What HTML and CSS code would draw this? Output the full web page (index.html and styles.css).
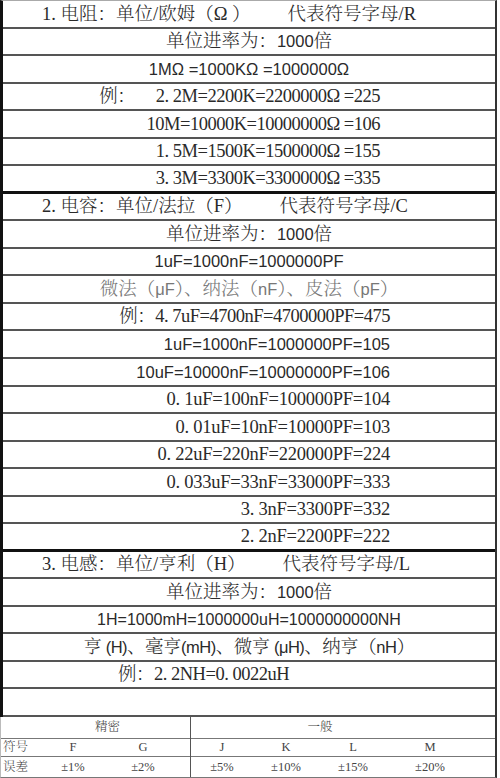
FILE: index.html
```html
<!DOCTYPE html>
<html lang="zh-CN">
<head>
<meta charset="utf-8">
<title>电阻 电容 电感 单位</title>
<link rel="stylesheet" href="styles.css">
</head>
<body>
<div class="sheet">
  <div class="main">
    <div class="row l">1. 电阻：单位/欧姆（Ω ）        代表符号字母/R</div>
    <div class="row c">单位进率为：<span class="sans">1000</span>倍</div>
    <div class="row c s">1MΩ =1000KΩ =1000000Ω</div>
    <div class="row r1 tight">例：     2. 2M=2200K=2200000Ω =225</div>
    <div class="row r1 tight">10M=10000K=10000000Ω =106</div>
    <div class="row r1 tight">1. 5M=1500K=1500000Ω =155</div>
    <div class="row r1 tight thick">3. 3M=3300K=3300000Ω =335</div>
    <div class="row l">2. 电容：单位/法拉（F）        代表符号字母/C</div>
    <div class="row c">单位进率为：<span class="sans">1000</span>倍</div>
    <div class="row c s">1uF=1000nF=1000000PF</div>
    <div class="row c grey">微法（<span class="sans">μF</span>）、纳法（<span class="sans">nF</span>）、皮法（<span class="sans">pF</span>）</div>
    <div class="row r2 tight">例：4. 7uF=4700nF=4700000PF=475</div>
    <div class="row r2 s">1uF=1000nF=1000000PF=105</div>
    <div class="row r2 s">10uF=10000nF=10000000PF=106</div>
    <div class="row r2 semi">0. 1uF=100nF=100000PF=104</div>
    <div class="row r2 semi">0. 01uF=10nF=10000PF=103</div>
    <div class="row r2 semi">0. 22uF=220nF=220000PF=224</div>
    <div class="row r2 semi">0. 033uF=33nF=33000PF=333</div>
    <div class="row r2 semi">3. 3nF=3300PF=332</div>
    <div class="row r2 semi thick">2. 2nF=2200PF=222</div>
    <div class="row l">3. 电感：单位/亨利（H）        代表符号字母/L</div>
    <div class="row c">单位进率为：<span class="sans">1000</span>倍</div>
    <div class="row c s s16">1H=1000mH=1000000uH=1000000000NH</div>
    <div class="row c tight">亨 <span class="sans">(H)</span>、毫亨<span class="sans">(mH)</span>、微亨 <span class="sans">(μH)</span>、纳亨（<span class="sans">nH</span>）</div>
    <div class="row l2 tight">例：2. 2NH=0. 0022uH</div>
    <div class="row"></div>
  </div>
  <div class="legend">
    <div class="lg-side lg-left">
      <div class="lg-h lg-h-l">精密</div>
      <div class="lg-r"><span class="lab">符号</span><span>F</span><span>G</span></div>
      <div class="lg-r last"><span class="lab">误差</span><span>±1%</span><span>±2%</span></div>
    </div>
    <div class="lg-side lg-right">
      <div class="lg-h lg-h-r">一般</div>
      <div class="lg-r"><span>J</span><span>K</span><span>L</span><span>M</span></div>
      <div class="lg-r last"><span>±5%</span><span>±10%</span><span>±15%</span><span>±20%</span></div>
    </div>
  </div>
</div>
</body>
</html>
```

FILE: styles.css
```css
* {
  box-sizing: border-box;
  margin: 0;
  padding: 0;
}

body {
  margin: 0;
  background: #fff;
  width: 500px;
  height: 778px;
  overflow: hidden;
  font-family: "Liberation Serif", "Noto Serif CJK SC", "Noto Sans CJK SC", serif;
  font-weight: 300;
  color: #2a2a2a;
}

.sheet {
  width: 497px;
}

.main {
  height: 717px;
  display: grid;
  grid-template-rows: repeat(26, 1fr);
  border-left: 3px solid #111;
  border-right: 2px solid #333;
  border-top: 1px solid #aaa;
}

.row {
  display: flex;
  align-items: center;
  border-bottom: 2px solid #555;
  font-size: 18.5px;
  line-height: 1;
  white-space: pre;
  min-height: 0;
  overflow: hidden;
}

.row.thick {
  border-bottom: 3px solid #111;
}

.tight {
  letter-spacing: -0.5px;
}

.semi {
  letter-spacing: -0.25px;
}

.c {
  justify-content: center;
}

.r1 {
  justify-content: flex-end;
  padding-right: 115px;
}

.r2 {
  justify-content: flex-end;
  padding-right: 105px;
}

.l {
  padding-left: 39px;
}

.l2 {
  padding-left: 115px;
}

.s,
.sans {
  font-family: "Liberation Sans", "Noto Sans CJK SC", sans-serif;
  font-size: 16.5px;
}

.s16 {
  font-size: 16px;
}

.grey {
  color: #777;
}

.legend {
  display: flex;
  height: 61px;
  border-left: 1px solid #bbb;
  border-right: 2px solid #333;
  border-bottom: 1px solid #777;
  font-family: "Liberation Serif", "Noto Serif CJK SC", "Noto Sans CJK SC", serif;
  font-size: 12.5px;
  line-height: 1;
  color: #444;
}

.lg-side {
  display: grid;
  grid-template-rows: 22px 18px 1fr;
}

.lg-left {
  width: 189px;
}

.lg-right {
  flex: 1;
  border-left: 1px solid #555;
}

.lg-h {
  display: flex;
  align-items: center;
  justify-content: center;
  border-bottom: 1px solid #777;
}

.lg-h-l {
  padding-left: 24px;
}

.lg-h-r {
  padding-right: 46px;
}

.lg-r {
  display: grid;
  align-items: center;
  border-bottom: 1px solid #777;
}

.lg-r.last {
  border-bottom: none;
}

.lg-r span {
  text-align: center;
}

.lg-r .lab {
  text-align: left;
  padding-left: 2px;
}

.lg-left .lg-r {
  grid-template-columns: 35px 74px 66px;
}

.lg-right .lg-r {
  grid-template-columns: 62px 66px 68px 86px;
}
```
